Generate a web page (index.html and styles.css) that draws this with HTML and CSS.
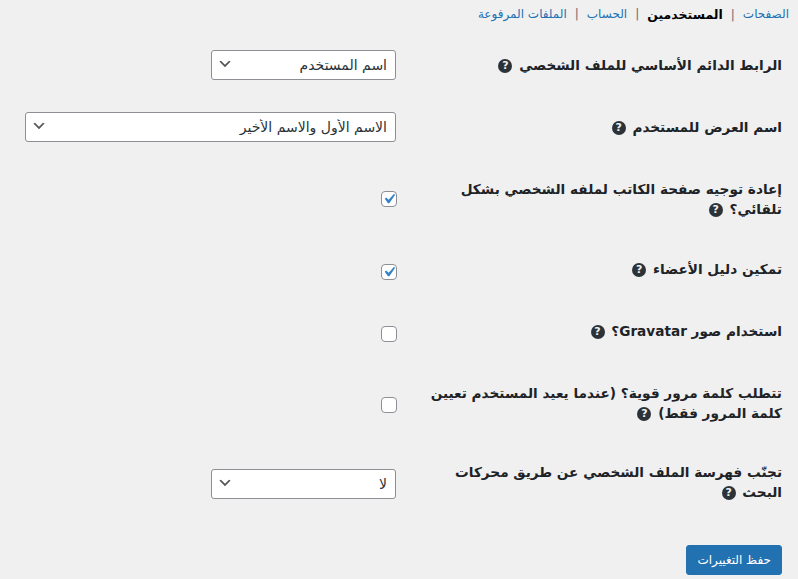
FILE: index.html

```html
<!DOCTYPE html>
<html lang="ar" dir="rtl">
<head>
  <meta charset="UTF-8">
  <title>إعدادات الملف الشخصي</title>
  <link rel="stylesheet" href="styles.css">
</head>
<body>
  <ul class="subnav">
    <li><a href="#">الصفحات</a></li>
    <li><a href="#" class="current">المستخدمين</a></li>
    <li><a href="#">الحساب</a></li>
    <li><a href="#">الملفات المرفوعة</a></li>
  </ul>

  <form class="settings">
    <div class="row">
      <label class="row-label">الرابط الدائم الأساسي للملف الشخصي <span class="help">?</span></label>
      <div class="row-field">
        <select class="field-select">
          <option>اسم المستخدم</option>
        </select>
      </div>
    </div>
    <div class="row">
      <label class="row-label">اسم العرض للمستخدم <span class="help">?</span></label>
      <div class="row-field">
        <select class="field-select field-wide">
          <option>الاسم الأول والاسم الأخير</option>
        </select>
      </div>
    </div>
    <div class="row row-redirect">
      <label class="row-label">إعادة توجيه صفحة الكاتب لملفه الشخصي بشكل تلقائي؟ <span class="help">?</span></label>
      <div class="row-field"><input type="checkbox" class="field-check" checked></div>
    </div>
    <div class="row row-low row-check">
      <label class="row-label">تمكين دليل الأعضاء <span class="help">?</span></label>
      <div class="row-field"><input type="checkbox" class="field-check" checked></div>
    </div>
    <div class="row row-low row-check">
      <label class="row-label">استخدام صور Gravatar؟ <span class="help">?</span></label>
      <div class="row-field"><input type="checkbox" class="field-check"></div>
    </div>
    <div class="row row-password row-low">
      <label class="row-label">تتطلب كلمة مرور قوية؟ (عندما يعيد المستخدم تعيين كلمة المرور فقط) <span class="help">?</span></label>
      <div class="row-field"><input type="checkbox" class="field-check"></div>
    </div>
    <div class="row row-two row-low">
      <label class="row-label">تجنّب فهرسة الملف الشخصي عن طريق محركات البحث <span class="help">?</span></label>
      <div class="row-field">
        <select class="field-select">
          <option>لا</option>
        </select>
      </div>
    </div>
    <div class="actions">
      <button type="button" class="save-btn">حفظ التغييرات</button>
    </div>
  </form>
</body>
</html>
```

FILE: styles.css

```css
body {
  margin: 0;
  background: #f0f0f1;
  color: #1d2327;
  font-family: "DejaVu Sans", sans-serif;
  font-size: 13px;
}
.subnav {
  display: flex;
  margin: 0;
  padding: 7px 9px 0 0;
  list-style: none;
  line-height: 15px;
  font-size: 12px;
}
.subnav li + li::before { content: "|"; color: #646970; margin: 0 8px; }
.subnav a { color: #2271b1; text-decoration: none; }
.subnav a.current { color: #000; font-weight: 600; font-size: 12.5px; }

.settings { padding: 11px 16px 0 16px; }
.row {
  display: grid;
  grid-template-columns: 352px 1fr;
  column-gap: 34px;
  align-items: center;
  min-height: 62px;
}
.row-two { min-height: 80px; }
.row-redirect { min-height: 81px; }
.row-password { min-height: 79px; }
.row-low .row-field { padding-top: 4px; }
.row-check .row-label { padding-bottom: 2px; }
.row-label {
  font-size: 13.65px;
  font-weight: 600;
  line-height: 20px;
}
.row-field { display: flex; }

.help {
  display: inline-block;
  width: 14px;
  height: 14px;
  margin-right: 2px;
  border-radius: 50%;
  background: #2c3338;
  color: #f0f0f1;
  font-size: 11px;
  font-weight: 700;
  line-height: 14px;
  text-align: center;
  vertical-align: 1px;
}

.field-select {
  appearance: none;
  width: 185px;
  height: 30px;
  padding: 0 8px 0 24px;
  border: 1px solid #8c8f94;
  border-radius: 3px;
  background: #fff url("data:image/svg+xml,%3Csvg xmlns='http://www.w3.org/2000/svg' width='20' height='20'%3E%3Cpath d='M5 6l5 5 5-5 2 1-7 7-7-7z' fill='%23555'/%3E%3C/svg%3E") no-repeat left 5px top 5px / 16px 16px;
  color: #2c3338;
  font: 14px "DejaVu Sans", sans-serif;
}
.field-wide { width: 371px; }

.field-check {
  appearance: none;
  width: 16px;
  height: 16px;
  margin: 0 -1px 0 0;
  border: 1px solid #8c8f94;
  border-radius: 4px;
  background: #fff;
}
.field-check:checked {
  background: #fff url("data:image/svg+xml,%3Csvg xmlns='http://www.w3.org/2000/svg' viewBox='0 0 20 20'%3E%3Cpath d='M14.83 4.89l1.34.94-5.81 8.38H9.02L5.78 9.67l1.34-1.25 2.57 2.4z' fill='%233582c4'/%3E%3C/svg%3E") center / 20px 20px no-repeat;
}

.actions {
  display: flex;
  margin-top: 23px;
}
.save-btn {
  height: 30px;
  padding: 0 10px;
  border: 1px solid #2271b1;
  border-radius: 3px;
  background: #2271b1;
  color: #fff;
  font: 12px "DejaVu Sans", sans-serif;
}
```
